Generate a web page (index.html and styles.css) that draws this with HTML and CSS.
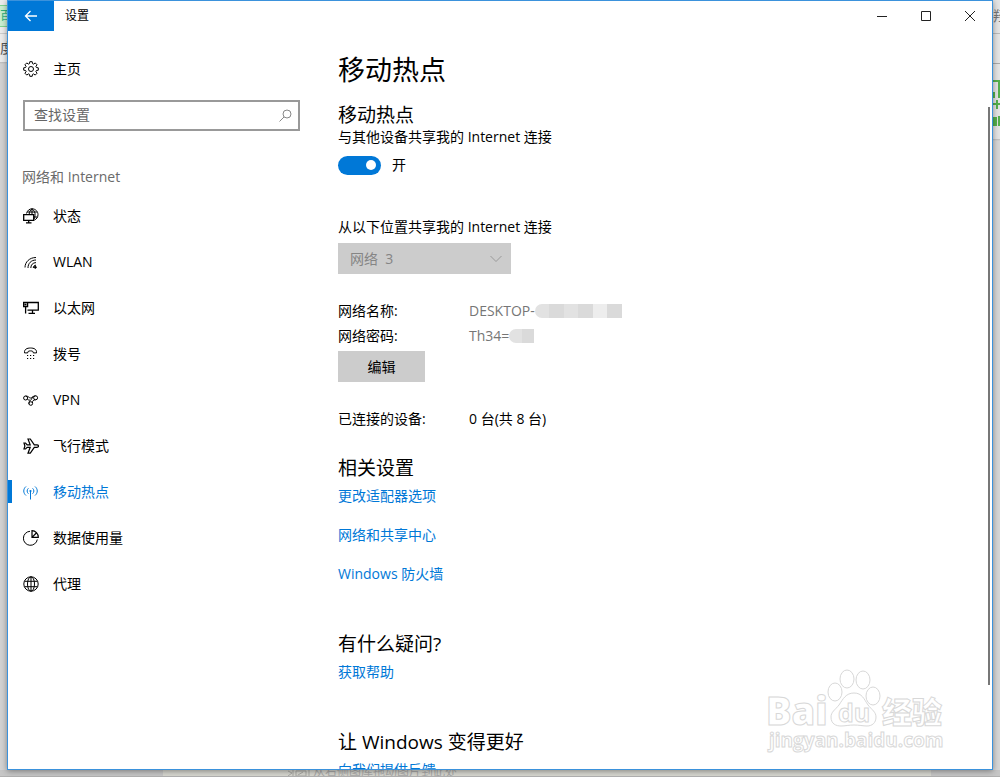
FILE: index.html
```html
<!DOCTYPE html>
<html lang="zh-CN">
<head>
  <meta charset="UTF-8">
  <meta name="viewport" content="width=device-width, initial-scale=1.0">
  <title>设置</title>
  <link rel="stylesheet" href="styles.css">
</head>
<body>

  <!-- 窗口后面露出的网页 -->
  <div class="behind behind-left" aria-hidden="true">
    <span class="tag">百</span>
    <span class="tab">度</span>
  </div>
  <div class="behind behind-right" aria-hidden="true">
    <span class="word">羟</span>
    <span class="bar"></span>
    <svg class="green" width="7" height="46" viewBox="0 0 7 46">
      <path d="M0 1h7M6 1v17M1 12v6M0 24h7M4 20v9M1 38h2v7H1zM6 36v10" fill="none" stroke="#55b04c" stroke-width="2"/>
    </svg>
  </div>
  <div class="behind behind-bottom" aria-hidden="true">
    <span class="paper">
      <svg width="24" height="7" viewBox="0 0 24 7">
        <path d="M1 1l4 2-4 3M6 0v6M9 1h10v5H9zM11 5l5-3M22 0v7" fill="none" stroke="#a9a9a5"/>
      </svg>
      <span>从右侧图库拖动图片到此处</span>
    </span>
  </div>

  <div class="window">
    <header class="titlebar">
      <button class="back" aria-label="后退">
        <svg width="14" height="12" viewBox="0 0 14 12"><path d="M6.500 1L1.500 6l5 5M1.500 6H13" fill="none" stroke="#fff" stroke-width="1.300"/></svg>
      </button>
      <span class="caption">设置</span>
      <div class="controls">
        <button aria-label="最小化"><svg width="12" height="12" viewBox="0 0 12 12"><path d="M1 6.500h10"/></svg></button>
        <button aria-label="最大化"><svg width="12" height="12" viewBox="0 0 12 12"><path d="M1.500 1.500h9v9h-9z"/></svg></button>
        <button aria-label="关闭"><svg width="12" height="12" viewBox="0 0 12 12"><path d="M1 1l10 10M11 1L1 11"/></svg></button>
      </div>
    </header>

    <div class="content">
      <nav class="sidebar">
        <a href="#" class="item home">
          <svg class="icon" viewBox="0 0 16 16"><path d="M6.800 .7h2.400l.3 1.900 1.200.5 1.500-1.200 1.900 1.900-1.200 1.500.5 1.200 1.900.3v2.400l-1.900.3-.5 1.200 1.200 1.500-1.900 1.900-1.500-1.200-1.200.5-.3 1.900H6.800l-.3-1.900-1.200-.5-1.500 1.200-1.900-1.900 1.200-1.500-.5-1.200L.7 9.200V6.800l1.900-.3.5-1.200-1.200-1.500 1.900-1.900 1.500 1.200 1.200-.5z"/><circle cx="8" cy="8" r="2.500"/></svg>
          主页
        </a>
        <div class="search">
          <input type="text" placeholder="查找设置" aria-label="查找设置">
          <svg width="13" height="13" viewBox="0 0 13 13"><circle cx="8" cy="5" r="4"/><path d="M5 8l-4.500 4.500"/></svg>
        </div>
        <h2 class="group">网络和 Internet</h2>
        <a href="#" class="item">
          <svg class="icon" viewBox="0 0 16 16"><path d="M3.500 5.500C4.300 2.500 6.400 .8 9 .8c3.400 0 6 2.500 6 5.800 0 2.600-1.500 4.600-3.500 5.400M9 .8C7 2.300 6.200 4 6.200 6.500M9 .8c2.300 1.600 3.400 3.800 3 6.800-.1 1.500-.5 2.500-1 3.500M9 .8v5.700M4.200 4h9.800M11 9h3.500"/><path d="M.7 6.600h10v5.800H.7zM5.700 12.400v2.400M3 14.900h5.500" stroke-width="1.300"/></svg>
          状态
        </a>
        <a href="#" class="item">
          <svg class="icon" viewBox="0 0 16 16"><path d="M2 13.500C2 8 6.500 3.500 13 3.500M5 14c0-4.500 3-8 8-8M7.800 14c0-3 2-5.400 5.200-5.400M10.300 14c0-1.700 1-2.800 2.700-2.800"/><circle cx="12.300" cy="13.300" r="1" fill="currentColor"/></svg>
          WLAN
        </a>
        <a href="#" class="item">
          <svg class="icon" viewBox="0 0 16 16"><path d="M5 2.500h10.300v7.700H4.500M.6 2.500h4v4h-4zM2.600 6.500v7M1.500 4.500h2M9.500 10.200v3M5.500 13.300h6.500" stroke-width="1.300"/></svg>
          以太网
        </a>
        <a href="#" class="item">
          <svg class="icon" viewBox="0 0 16 16"><path d="M1.500 6.900C1 3.300 4 2 7.500 2s6.500 1.300 6 4.900h-3.200c0-1.400-.5-2-2.800-2s-2.800.6-2.800 2z"/><path d="M4 9.500h1.200M7 9.500h1.200M10 9.500h1.200M4 12.500h1.200M7 12.500h1.200M10 12.500h1.200"/></svg>
          拨号
        </a>
        <a href="#" class="item">
          <svg class="icon" viewBox="0 0 16 16"><circle cx="2.600" cy="6" r="2"/><circle cx="12.600" cy="5.800" r="2"/><circle cx="7.800" cy="11.500" r="1.800"/><path d="M2.600 4c3 0 3.400 2 5 2s2-2 5-2.200M4.300 7.200c1.200.8 2 1.300 2.700.6M6.200 12.400c-1-1.500 0-3 1.400-4.200C9 7 9.300 5 10.200 4.400M9.500 11c-.4-2 1-3.200 3.100-3.200"/></svg>
          VPN
        </a>
        <a href="#" class="item">
          <svg class="icon" viewBox="0 0 16 16"><path d="M1 5h1.500l1.700 1.900h3L5 1h2.300l4 5.900H14c2 0 2 2.400 0 2.400h-2.700l-4 5.900H5l2.200-5.900h-3L2.500 11H1l.9-3z" stroke-width="1.200"/></svg>
          飞行模式
        </a>
        <a href="#" class="item active">
          <svg class="icon" viewBox="0 0 16 16"><circle cx="7.500" cy="7" r="1.100" fill="currentColor" stroke="none"/><path d="M7.500 7v8.500M5.400 4.300c-1.700 1.600-1.700 3.800 0 5.400M9.600 4.300c1.700 1.600 1.700 3.800 0 5.400M3 2.500C0 5 0 9 3 11.500M12 2.500c3 2.500 3 6.500 0 9"/></svg>
          移动热点
        </a>
        <a href="#" class="item">
          <svg class="icon" viewBox="0 0 16 16"><path d="M7 1.300A7 7 0 1 0 14.300 9.500"/><path d="M9 .7V7.300h6.300C15.300 3.500 12.500 .7 9 .7zM9 7.300l4.300-4.300" stroke-width="1.200"/></svg>
          数据使用量
        </a>
        <a href="#" class="item">
          <svg class="icon" viewBox="0 0 16 16"><circle cx="8" cy="8" r="7.200"/><ellipse cx="8" cy="8" rx="3.500" ry="7.200"/><path d="M1.500 5.300h13M1.500 10.700h13M8 1v14"/></svg>
          代理
        </a>
      </nav>

      <main class="main">
        <h1>移动热点</h1>
        <h2>移动热点</h2>
        <p>与其他设备共享我的 Internet 连接</p>
        <label class="switch">
          <input type="checkbox" checked>
          <span>开</span>
        </label>

        <label class="source" for="source">从以下位置共享我的 Internet 连接</label>
        <div class="dropdown">
          <select id="source" disabled>
            <option>网络&nbsp; 3</option>
          </select>
          <svg width="12" height="8" viewBox="0 0 12 8"><path d="M.5 1L6 6.500 11.500 1"/></svg>
        </div>

        <dl class="info">
          <dt>网络名称:</dt>
          <dd>DESKTOP-<span class="mask"><i></i><i></i><i></i><i></i><i></i><i></i></span></dd>
          <dt>网络密码:</dt>
          <dd>Th34=<span class="mask short"><i></i><i></i></span></dd>
        </dl>
        <button class="edit">编辑</button>
        <dl class="info devices">
          <dt>已连接的设备:</dt>
          <dd>0 台(共 8 台)</dd>
        </dl>

        <section class="links">
          <h2>相关设置</h2>
          <a href="#">更改适配器选项</a>
          <a href="#">网络和共享中心</a>
          <a href="#">Windows 防火墙</a>
        </section>
        <section class="links">
          <h2>有什么疑问?</h2>
          <a href="#">获取帮助</a>
        </section>
        <section class="links">
          <h2>让 Windows 变得更好</h2>
          <a href="#">向我们提供反馈</a>
        </section>
      </main>
      <div class="scrollbar"></div>
    </div>
  </div>

  <!-- 水印 -->
  <svg class="watermark" width="190" height="92" viewBox="0 0 190 92">
    <ellipse cx="73" cy="28" rx="7" ry="9"/>
    <ellipse cx="85" cy="15" rx="7" ry="9"/>
    <ellipse cx="101" cy="16" rx="7" ry="9"/>
    <ellipse cx="111" cy="32" rx="7" ry="9"/>
    <path d="M92 29c-8 0-11 6-15 12-4 5-8 7-8 12 0 7 5 9 10 9 4 0 8-1 13-1s9 1 13 1c5 0 9-3 9-9 0-5-4-7-8-12-4-6-6-12-14-12z"/>
    <text class="bai" x="4" y="61">Bai</text>
    <text class="du" x="76" y="58">du</text>
    <text class="exp" x="120" y="59">经验</text>
    <text class="site" x="7" y="83">jingyan.baidu.com</text>
  </svg>

</body>
</html>
```
FILE: styles.css
```css
* {
  box-sizing: border-box;
}

body {
  margin: 0;
  height: 100vh;
  display: grid;
  grid-template-columns: 7px 1fr 7px;
  grid-template-rows: 1fr 7px;
  overflow: hidden;
  position: relative;
  background-color: #d2d2d2;
  color: #000;
  font-family: "Open Sans", "Noto Sans CJK SC", sans-serif;
  font-size: 14px;
  line-height: 20px;
}

h1, h2, p, dl, dd {
  margin: 0;
  font-weight: normal;
}

a {
  color: #0078d7;
  text-decoration: none;
}

button, input, select {
  font: inherit;
  border: none;
  border-radius: 0;
  padding: 0;
}

/* 背景网页 */
.behind {
  overflow: hidden;
}

.behind-left {
  background: linear-gradient(#ececec 62px, #bbb 62px, #d2d2d2 64px);
}

.behind-left span {
  display: block;
  width: 7px;
  overflow: hidden;
  white-space: nowrap;
}

.behind-left .tag {
  margin-top: 5px;
  height: 22px;
  background-color: #c9efd0;
  border: solid #7fd491;
  border-width: 1px 0;
  color: #2fb37c;
  font-size: 12px;
}

.behind-left .tab {
  margin-top: 6px;
  height: 29px;
  border-top: 1px solid #ccc;
  line-height: 28px;
  color: #555;
}

.behind-right {
  grid-column: 3;
  grid-row: 1;
  background: linear-gradient(#e4e4e4 139px, #bbb 139px, #d6d6d6 141px);
}

.behind-right span {
  display: block;
}

.behind-right .word {
  height: 34px;
  border-bottom: 1px solid #bbb;
  line-height: 32px;
  color: #777;
}

.behind-right .bar {
  height: 30px;
  margin-bottom: 16px;
  border-bottom: 1px solid #aaa;
}

.behind-right .green {
  display: block;
}

.behind-bottom {
  grid-column: 1 / 4;
  grid-row: 2;
  padding: 0 69px 0 163px;
  background-color: #c6c6c6;
  border-bottom: 1px solid #b0b0b0;
}

.behind-bottom .paper {
  display: flex;
  gap: 2px;
  height: 6px;
  padding-left: 124px;
  overflow: hidden;
  background-color: #d6d6cf;
  color: #aaa;
  font-size: 12px;
  line-height: 4px;
}

/* 设置窗口 */
.window {
  grid-column: 2;
  grid-row: 1;
  display: flex;
  flex-direction: column;
  min-height: 0;
  border: 1px solid #3b92dc;
  background-color: #fff;
  box-shadow: 0 1px 6px rgba(0, 0, 0, 0.4);
}

.titlebar {
  display: flex;
  height: 30px;
  flex: none;
}

.back {
  width: 46px;
  background-color: #0078d7;
}

.back svg {
  display: block;
  margin: 0 auto;
}

.caption {
  margin-left: 11px;
  font-size: 12px;
  line-height: 29px;
}

.controls {
  display: flex;
  margin-left: auto;
}

.controls button {
  width: 44px;
  background: none;
}

.controls svg {
  display: block;
  margin: 0 auto;
  fill: none;
  stroke: #222;
}

.content {
  flex: 1;
  display: flex;
  min-height: 0;
  overflow: hidden;
}

/* 左侧导航 */
.sidebar {
  flex: none;
  width: 330px;
}

.item {
  display: flex;
  align-items: center;
  gap: 14px;
  height: 46px;
  padding-left: 15px;
  color: #000;
}

.home {
  margin-top: 15px;
}

.icon {
  width: 16px;
  height: 16px;
  fill: none;
  stroke: currentColor;
}

.item.active {
  position: relative;
  color: #0078d7;
}

.item.active::before {
  content: "";
  position: absolute;
  left: 0;
  top: 11px;
  width: 4px;
  height: 23px;
  background-color: #0078d7;
}

.search {
  display: flex;
  align-items: center;
  width: 277px;
  height: 31px;
  margin: 8px 0 0 15px;
  padding: 0 6px 0 9px;
  border: 2px solid #999;
}

.search input {
  flex: 1;
  min-width: 0;
  padding-bottom: 2px;
  outline: none;
}

.search input::placeholder {
  color: #666;
  opacity: 1;
}

.search svg {
  fill: none;
  stroke: #888;
}

.group {
  margin: 36px 0 6px 14px;
  color: #6a6a6a;
  font-size: 14px;
}

/* 右侧内容 */
.main {
  flex: 1;
}

h1 {
  margin-top: 21px;
  font-size: 27px;
  line-height: 36px;
}

.main h2 {
  font-size: 19px;
  line-height: 26px;
}

h1 + h2 {
  margin-top: 14px;
}

.main p {
  line-height: 18px;
}

.switch {
  display: flex;
  align-items: center;
  gap: 11px;
  margin-top: 9px;
}

.switch input {
  appearance: none;
  display: flex;
  align-items: center;
  justify-content: flex-end;
  width: 43px;
  height: 19px;
  margin: 0;
  padding-right: 5px;
  border-radius: 10px;
  background-color: #0078d7;
}

.switch input::after {
  content: "";
  width: 10px;
  height: 10px;
  border-radius: 50%;
  background-color: #fff;
}

.source {
  display: block;
  margin: 42px 0 6px;
}

.dropdown {
  display: grid;
  align-items: center;
  width: 173px;
}

.dropdown select {
  grid-area: 1 / 1;
  appearance: none;
  height: 31px;
  padding-left: 12px;
  background-color: #ccc;
  color: #858585;
  opacity: 1;
}

.dropdown svg {
  grid-area: 1 / 1;
  justify-self: end;
  margin-right: 9px;
  fill: none;
  stroke: #999;
}

.info {
  display: grid;
  grid-template-columns: 131px 1fr;
  margin-top: 24px;
  line-height: 25px;
}

.info dd {
  display: flex;
  align-items: center;
  color: #767676;
}

.mask {
  display: flex;
  width: 87px;
  height: 14px;
  border-radius: 8px 0 0 8px;
  overflow: hidden;
}

.mask i {
  flex: 1;
  background-color: #e2e2e2;
}

.mask i:nth-child(even) {
  background-color: #dadada;
}

.mask i:nth-child(5) {
  background-color: #ededed;
}

.mask.short {
  width: 25px;
}

.edit {
  display: block;
  width: 87px;
  height: 31px;
  margin-top: 3px;
  background-color: #ccc;
}

.devices dd {
  color: #000;
}

.links {
  margin-top: 47px;
}

.devices + .links {
  margin-top: 24px;
}

.links a {
  display: block;
  width: fit-content;
  margin-top: 19px;
}

.links h2 + a {
  margin-top: 5px;
}

.scrollbar {
  flex: none;
  width: 2px;
  margin: 76px 2px 84px 0;
  background-color: #777;
}

/* 水印 */
.watermark {
  position: absolute;
  right: 48px;
  bottom: 21px;
  fill: #fff;
  stroke: #d8d8d8;
  stroke-width: 1;
  font-weight: bold;
}

.bai {
  font-size: 38px;
  font-weight: 800;
}

.du {
  font-size: 25px;
}

.exp {
  font-size: 30px;
  font-weight: 900;
}

.site {
  font-size: 19px;
}
```
